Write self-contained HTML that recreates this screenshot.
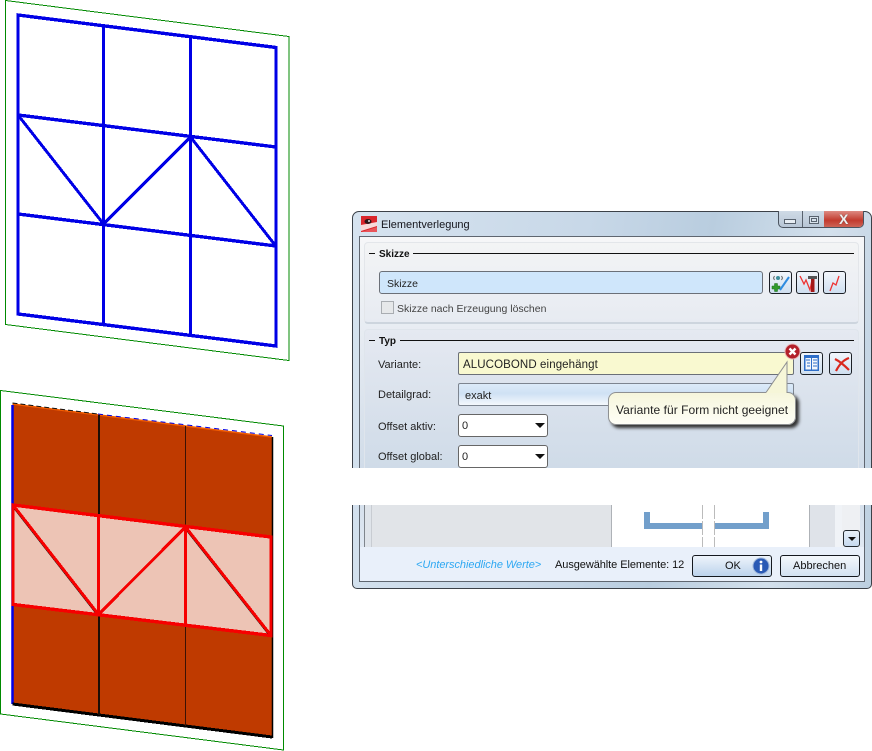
<!DOCTYPE html>
<html lang="de">
<head>
<meta charset="utf-8">
<title>Elementverlegung</title>
<style>
html,body{margin:0;padding:0;background:#fff}
body{width:872px;height:751px;position:relative;overflow:hidden;font-family:"Liberation Sans",sans-serif;font-size:11px;color:#222}
.a{position:absolute;box-sizing:border-box}
.t{position:absolute;white-space:nowrap;line-height:14px}
.btn{position:absolute;box-sizing:border-box;width:23px;height:23px;border:1px solid #1c2026;border-radius:3px;background:linear-gradient(#f2f6fb,#cfdff0)}
.btn svg{position:absolute;left:0;top:0}
.gl{position:absolute;height:1px;background:#111}
.g{font-weight:bold;color:#111;font-size:10px}
.cb{position:absolute;box-sizing:border-box;width:90px;height:23px;left:458px;border:1px solid #666;border-radius:3px;background:#fff}
.cb i{position:absolute;left:76px;top:8px;width:0;height:0;border:5px solid transparent;border-top:5px solid #111;border-bottom:0}
</style>
</head>
<body>
<svg class="a" style="left:0;top:0" width="300" height="751" viewBox="0 0 300 751">
<g fill="none" stroke="#008a00" stroke-width="1" shape-rendering="crispEdges">
<path d="M5.500 .5 289 36.500V360.500L5.500 324.500Z"/>
<path d="M.5 390.500 283.500 426V750L.5 714Z"/>
</g>
<g fill="none" stroke="#0000e6" stroke-width="3.400" shape-rendering="crispEdges">
<path d="M18 15 276 47.500V346L18 314Z"/>
<path d="M103.500 25V325M190.500 36V336M18 115 276 147M18 214 276 246"/>
<path stroke-width="3" d="M18 115 103.500 224 190.500 137 275 245"/>
</g>
<path d="M12.500 404 272 437V737L12.500 704Z" fill="#bf3a00"/>
<path d="M12.500 404 272 437" fill="none" stroke="#f25c00" stroke-width="1.500"/>
<path d="M12.500 404 98 415" fill="none" stroke="#111" stroke-width="1" stroke-dasharray="5 3" transform="translate(0 -1)"/>
<path d="M98 415 272 436.500" fill="none" stroke="#0000e6" stroke-width="1" stroke-dasharray="5 4" transform="translate(0 -1)"/>
<path d="M12.500 405V704" stroke="#0000e6" stroke-width="2.500"/>
<path d="M12.500 704 272 737" fill="none" stroke="#000" stroke-width="3" shape-rendering="crispEdges"/>
<path d="M272.500 437V738" stroke="#000" stroke-width="1.500"/>
<path d="M99 415V715" stroke="#1c0d05" stroke-width="2"/>
<path d="M185.500 426V726" stroke="#3a1204" stroke-width="1"/>
<path d="M13 505 271 537V635.500L13 604.500Z" fill="#edc4b5"/>
<g fill="none" stroke="#000" stroke-width="2" transform="translate(-.6 .6)"><path d="M13 505 98.500 614.500 185.500 527 271 635.500"/></g>
<g fill="none" stroke="#f60000" stroke-width="3.400" shape-rendering="crispEdges">
<path d="M13 505 271 537V635.500L13 604.500Z"/>
<path d="M98.500 514.500V614.500M185.500 527V627"/>
<path stroke-width="3" d="M13 505 98.500 614.500 185.500 527 271 635.500"/>
</g>
</svg>

<!-- window -->
<div class="a" style="left:352px;top:211px;width:520px;height:378px;border:1px solid #3c4148;border-radius:7px 7px 5px 5px;background:linear-gradient(100deg,#d6e3ef 0%,#c8d8e8 40%,#b9cddf 62%,#d3e0ec 82%,#bccfe0 100%)"></div>
<div class="a" style="left:359px;top:236px;width:506px;height:346px;border:1px solid #5f6670;background:linear-gradient(#f6f7f8,#e6ebf2 30%,#cfdbe8 70%,#e8eff8)"></div>

<svg class="a" style="left:361px;top:216px" width="16" height="16" viewBox="0 0 16 16"><rect width="16" height="16" fill="#d9262c"/><path d="M0 9 16 6V10L0 15Z" fill="#f7d9d9"/><path d="M0 16 16 11V16Z" fill="#e8555a"/><ellipse cx="7" cy="5.500" rx="3.500" ry="2.500" fill="#2c1518"/><circle cx="8" cy="5" r="1" fill="#ddd"/></svg>
<div class="t" style="left:381px;top:218px;color:#15151c">Elementverlegung</div>

<!-- window buttons -->
<div class="a" style="left:778px;top:211px;width:86px;height:17px;border:1px solid #4b5460;border-top:0;border-radius:0 0 5px 5px;background:linear-gradient(#cfdae6,#b8c6d6);overflow:hidden">
<div class="a" style="left:23px;top:0;width:1px;height:17px;background:#59626e"></div>
<div class="a" style="left:45px;top:0;width:40px;height:17px;background:linear-gradient(#dd8a82,#c23b2e 55%,#cf6a5c)"></div>
<div class="a" style="left:5px;top:8px;width:12px;height:5px;border:1px solid #59636f;background:#e7edf3"></div>
<div class="a" style="left:30px;top:5px;width:10px;height:8px;border:1px solid #59636f;background:#d8e2ec"><div class="a" style="left:1px;top:1px;width:6px;height:4px;border:1px solid #59636f"></div></div>
<div class="t" style="left:60px;top:1px;font-size:14px;font-weight:bold;color:#f0f0f0;text-shadow:0 0 1px #444">X</div>
</div>

<!-- group Skizze -->
<div class="a" style="left:364px;top:242px;width:495px;height:82px;border:1px solid #e3e6ea;border-bottom:2px solid #cdd5de;border-radius:4px;background:linear-gradient(#f3f4f5,#e7ebf2)"></div>
<div class="gl" style="left:369px;top:253px;width:6px"></div>
<div class="t g" style="left:379px;top:248px">Skizze</div>
<div class="gl" style="left:413px;top:253px;width:441px"></div>
<div class="a" style="left:379px;top:271px;width:384px;height:23px;border:1px solid #6b7078;border-radius:3px;background:#cfe6fb"></div>
<div class="t" style="left:387px;top:277px;font-size:10.500px">Skizze</div>
<div class="a" style="left:381px;top:301px;width:13px;height:13px;border:1px solid #a9adb2;background:#e6e8ea"></div>
<div class="t" style="left:397px;top:302px;color:#444;font-size:10.500px">Skizze nach Erzeugung löschen</div>

<div class="btn" style="left:769px;top:271px"><svg width="21" height="21" viewBox="0 0 21 21"><circle cx="8" cy="6" r="2" fill="#3f8f9c"/><path d="M4.500 4 3.500 6 4.500 8M11.500 4 12.500 6 11.500 8" fill="none" stroke="#666"/><path d="M4.500 11.500h3v2.500h2.500v3H7.500v2.500h-3V17H2v-3h2.500Z" fill="#2f9a2c" stroke="#1d6d1d" stroke-width=".5"/><path d="M10 18 19 5" stroke="#2e8be0" stroke-width="2" fill="none"/></svg></div>
<div class="btn" style="left:796px;top:271px"><svg width="21" height="21" viewBox="0 0 21 21"><path d="M3 4 7 12 9 8 13 18 15 8" fill="none" stroke="#e33" stroke-width="1.300"/><path d="M11 4H20V7H11Z" fill="#555"/><rect x="14" y="7" width="3.500" height="13" fill="#a31818"/></svg></div>
<div class="btn" style="left:823px;top:271px"><svg width="21" height="21" viewBox="0 0 21 21"><path d="M6 19 9 11 12 13 15 4" fill="none" stroke="#e33" stroke-width="1.300"/></svg></div>

<!-- group Typ -->
<div class="a" style="left:364px;top:329px;width:495px;height:139px;border:1px solid #dfe5ec;border-bottom:0;border-radius:4px 4px 0 0;background:linear-gradient(#e5e9f1,#cfdbe8)"></div>
<div class="gl" style="left:369px;top:340px;width:6px"></div>
<div class="t g" style="left:379px;top:335px">Typ</div>
<div class="gl" style="left:400px;top:340px;width:454px"></div>

<div class="t" style="left:378px;top:358px">Variante:</div>
<div class="t" style="left:378px;top:388px">Detailgrad:</div>
<div class="t" style="left:378px;top:420px">Offset aktiv:</div>
<div class="t" style="left:378px;top:450px">Offset global:</div>

<div class="a" style="left:458px;top:352px;width:336px;height:23px;border:1px solid #6b7078;border-radius:2px;background:#f9f9d0"></div>
<div class="t" style="left:463px;top:358px;font-size:11.500px;letter-spacing:.1px">ALUCOBOND eingehängt</div>
<div class="a" style="left:458px;top:383px;width:336px;height:23px;border:1px solid #7d8590;border-radius:2px;background:linear-gradient(#dcebf9,#cfe1f4 45%,#f4f8fc)"></div>
<div class="t" style="left:465px;top:389px">exakt</div>
<div class="cb" style="top:414px"><i></i></div>
<div class="t" style="left:462px;top:419px">0</div>
<div class="cb" style="top:445px"><i></i></div>
<div class="t" style="left:462px;top:450px">0</div>

<!-- right side buttons -->
<div class="btn" style="left:800px;top:352px"><svg width="21" height="21" viewBox="0 0 21 21"><rect x="3" y="2" width="15" height="16" fill="#2f6fc9"/><rect x="4.500" y="5" width="5.500" height="11.500" fill="#f2f6fb"/><rect x="11" y="5" width="5.500" height="11.500" fill="#f2f6fb"/><path d="M5 7H9M6 10H9M6 13H9M12 7H16M12 10H16M12 13H16" stroke="#2f6fc9"/></svg></div>
<div class="btn" style="left:829px;top:352px"><svg width="21" height="21" viewBox="0 0 21 21"><path d="M5 6C9 8 15 13 19 17M19 5C13 7 9 12 6 18" fill="none" stroke="#d9281e" stroke-width="2.200"/></svg></div>

<!-- tooltip -->
<div class="a" style="left:608px;top:392px;width:188px;height:33px;border:1px solid #8e9092;border-radius:8px;background:linear-gradient(#f6f6dc,#fefef6);box-shadow:3px 3px 3px #333"></div>
<svg class="a" style="left:760px;top:360px" width="32" height="36" viewBox="0 0 32 36"><path d="M6 32.500 27 2V33H6Z" fill="#f6f6d8"/><path d="M6 32.500 27 2V33" fill="none" stroke="#8e9092"/></svg>
<div class="t" style="left:616px;top:403px;color:#222;font-size:12px;letter-spacing:.05px">Variante für Form nicht geeignet</div>
<svg class="a" style="left:784px;top:343px" width="17" height="17" viewBox="0 0 17 17"><circle cx="8.500" cy="8.500" r="7.500" fill="#b3202a" stroke="#e9b9b9"/><path d="M5.500 5.500 11.500 11.500M11.500 5.500 5.500 11.500" stroke="#fff" stroke-width="2.400"/></svg>

<!-- white cut -->
<div class="a" style="left:340px;top:468px;width:532px;height:37px;background:#fff"></div>

<!-- lower preview -->
<div class="a" style="left:364px;top:505px;width:495px;height:42px;background:#dfe4ea"></div>
<div class="a" style="left:364px;top:505px;width:1px;height:42px;background:#7f858c"></div>
<div class="a" style="left:371px;top:505px;width:240px;height:42px;border-left:1px solid #c8ccd2;background:#e1e4e8"></div>
<div class="a" style="left:611px;top:505px;width:198px;height:42px;background:#fff;border-left:1px solid #aeb2b7"></div>
<div class="a" style="left:809px;top:505px;width:1px;height:42px;background:#aeb2b7"></div>
<div class="a" style="left:810px;top:505px;width:25px;height:42px;background:#dfe3e9"></div>
<div class="a" style="left:835px;top:505px;width:7px;height:42px;background:#f0f3f7"></div>
<div class="a" style="left:842px;top:505px;width:18px;height:42px;background:#eef0f3"></div>
<div class="a" style="left:644px;top:512px;width:58px;height:17px;border:6px solid #729fcb;border-top:0;border-right:0"></div>
<div class="a" style="left:714px;top:512px;width:55px;height:17px;border:6px solid #729fcb;border-top:0;border-left:0"></div>
<div class="a" style="left:702px;top:505px;width:1px;height:42px;background:repeating-linear-gradient(#bbb 0 14px,#fff 14px 16px)"></div>
<div class="a" style="left:714px;top:505px;width:1px;height:42px;background:repeating-linear-gradient(#bbb 0 14px,#fff 14px 16px)"></div>
<div class="a" style="left:843px;top:530px;width:17px;height:17px;border:1px solid #23282e;border-radius:3px;background:linear-gradient(#e8f0f9,#c6d9ee)"></div>
<div class="a" style="left:848px;top:537px;width:0;height:0;border:4px solid transparent;border-top:4px solid #111;border-bottom:0"></div>

<!-- footer -->
<div class="a" style="left:360px;top:547px;width:504px;height:34px;background:#e9f0fa"></div>
<div class="t" style="left:416px;top:558px;font-style:italic;color:#2ea8f2;letter-spacing:-.05px">&lt;Unterschiedliche Werte&gt;</div>
<div class="t" style="left:555px;top:558px;color:#111;letter-spacing:-.07px">Ausgewählte Elemente: 12</div>
<div class="a" style="left:692px;top:555px;width:80px;height:22px;border:1px solid #15191f;border-radius:3px;background:linear-gradient(#eef4fb,#bcd3ec)"></div>
<div class="t" style="left:725px;top:559px;color:#111">OK</div>
<svg class="a" style="left:752px;top:557px" width="18" height="18" viewBox="0 0 18 18"><circle cx="9" cy="9" r="8" fill="#2a5ab5" stroke="#9fb6d9"/><circle cx="9" cy="5" r="1.400" fill="#fff"/><rect x="7.800" y="7.500" width="2.400" height="6.500" fill="#fff"/></svg>
<div class="a" style="left:780px;top:555px;width:80px;height:22px;border:1px solid #15191f;border-radius:3px;background:linear-gradient(#f4f8fc,#d2e1f1)"></div>
<div class="t" style="left:793px;top:559px;color:#111">Abbrechen</div>
</body>
</html>
